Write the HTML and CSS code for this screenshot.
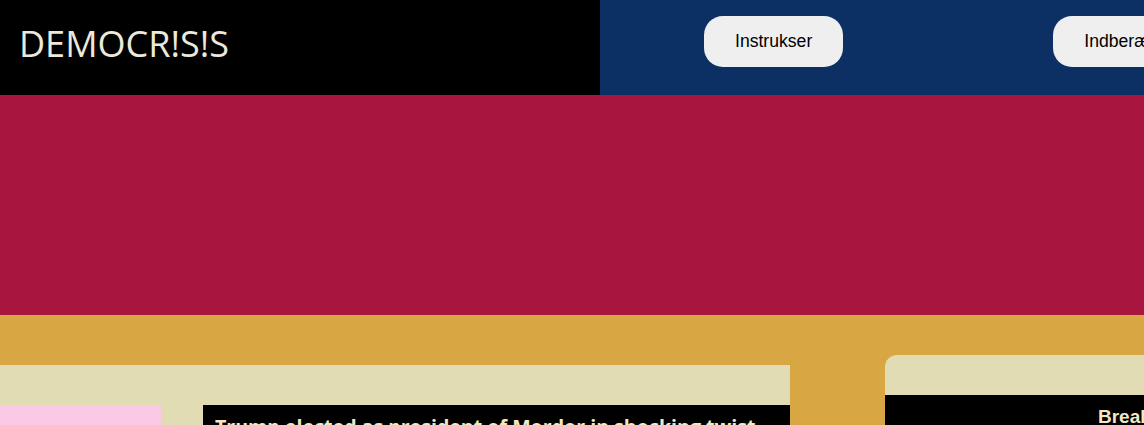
FILE: index.html
```html
<!DOCTYPE html>
<html lang="da">
<head>
<meta charset="utf-8">
<title>DEMOCR!S!S</title>
<link rel="stylesheet" href="styles.css">
</head>
<body>
<header class="top">
  <div class="brand">DEMOCR!S!S</div>
  <nav class="nav">
    <button class="nav-btn">Instrukser</button>
    <button class="nav-btn">Indberæt</button>
  </nav>
</header>
<section class="hero"></section>
<main class="content">
  <section class="feed">
    <div class="feed-row">
      <div class="thumb"></div>
      <div class="headline">Trump elected as president of Mordor in shocking twist</div>
    </div>
  </section>
  <aside class="side">
    <div class="side-head">Breaking news</div>
  </aside>
</main>
</body>
</html>
```
FILE: styles.css
```css
html, body {
  margin: 0;
  padding: 0;
  width: 1144px;
  height: 425px;
  overflow: hidden;
  background: #d8a744;
}
.top {
  display: flex;
  height: 95px;
}
.brand {
  width: 600px;
  flex: none;
  background: #000;
  color: #ece8dc;
  font-family: "Open Sans", sans-serif;
  font-size: 36px;
  line-height: 88px;
  padding-left: 19px;
  box-sizing: border-box;
}
.nav {
  flex: 1;
  background: #0c3063;
  display: flex;
  align-items: flex-start;
  padding: 16px 0 0 104px;
  gap: 210px;
  white-space: nowrap;
  overflow: hidden;
}
.nav-btn {
  flex: none;
  height: 51px;
  padding: 0 31px;
  border: none;
  border-radius: 19px;
  background: #efefef;
  color: #000;
  font-family: "Liberation Sans", Arial, sans-serif;
  font-size: 17.6px;
}
.hero {
  height: 220px;
  background: #a8163e;
}
.content {
  display: flex;
  align-items: flex-start;
  padding-top: 40px;
  gap: 95px;
}
.feed {
  width: 790px;
  flex: none;
  margin-top: 10px;
  background: #e1dcb3;
  padding-top: 40px;
  height: 100px;
}
.feed-row {
  display: flex;
  gap: 42px;
}
.thumb {
  width: 161px;
  height: 80px;
  background: #f9c9e5;
}
.headline {
  flex: 1;
  background: #000;
  color: #f1e8c4;
  font-family: "Open Sans", sans-serif;
  font-weight: 700;
  font-size: 19.6px;
  padding: 8px 12px;
  height: 80px;
  box-sizing: border-box;
  white-space: nowrap;
}
.side {
  flex: 1;
  min-width: 400px;
  background: #e1dcb3;
  border-radius: 12px 0 0 0;
  padding-top: 40px;
}
.side-head {
  background: #000;
  color: #f1e8c4;
  font-family: "Liberation Sans", Arial, sans-serif;
  font-weight: 700;
  font-size: 19px;
  padding: 11px 0 0 213px;
  height: 60px;
  box-sizing: border-box;
  white-space: nowrap;
}
```
